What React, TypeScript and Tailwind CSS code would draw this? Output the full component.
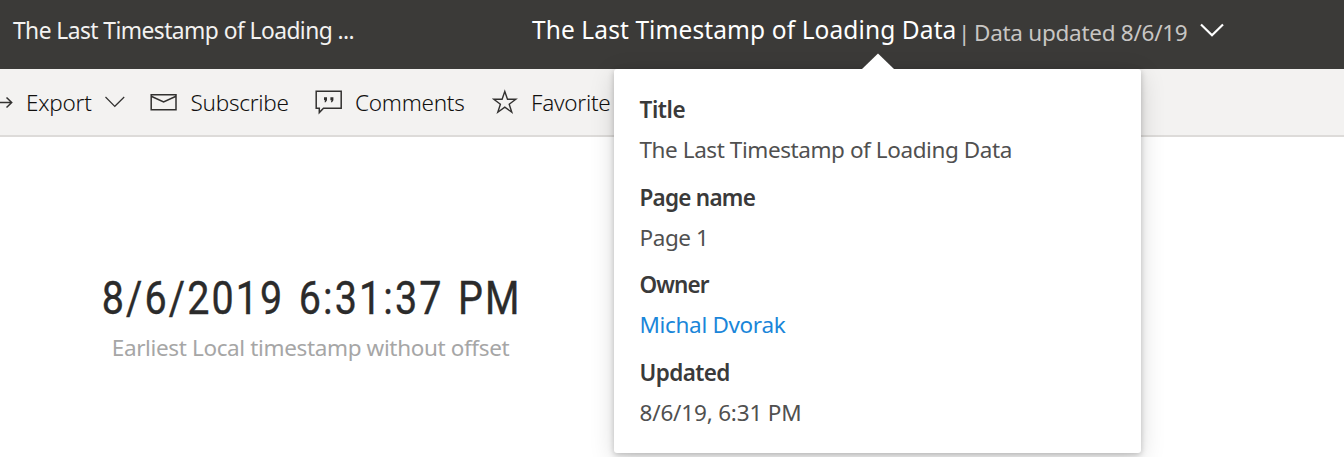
import React from 'react';

const details = [
  { label: 'Title', value: 'The Last Timestamp of Loading Data', labelClass: 'tracking-[-0.4px]', valueClass: 'text-[#505050] tracking-[-0.42px]' },
  { label: 'Page name', value: 'Page 1', labelClass: 'tracking-[-0.75px]', valueClass: 'text-[#505050] tracking-[-0.4px]' },
  { label: 'Owner', value: 'Michal Dvorak', labelClass: 'tracking-[-0.9px]', valueClass: 'text-[#1a86d9] tracking-[-0.33px]' },
  { label: 'Updated', value: '8/6/19, 6:31 PM', labelClass: 'tracking-[-0.6px]', valueClass: 'text-[#505050] tracking-[-0.18px]' },
];

function DetailsCard() {
  return (
    <div className="absolute left-[613.5px] top-[69px] z-10 h-[384px] w-[527.5px] rounded-[3px] bg-white pl-[26px] pt-[20px] shadow-[0_2px_6px_rgba(0,0,0,0.22),0_6px_26px_rgba(0,0,0,0.14)]">
      <svg className="absolute left-[247.5px] top-[-16px]" width="34" height="17" viewBox="0 0 34 17" fill="#fff">
        <path d="M0.5 16.5 17 0.5 33.5 16.5Z" />
      </svg>
      <dl className="text-[22.5px]">
        {details.map((d) => (
          <div key={d.label} className="mb-[7.5px] whitespace-nowrap">
            <dt className={'font-semibold leading-[41px] text-[#3a3a3a] ' + d.labelClass}>{d.label}</dt>
            <dd className={'leading-[39px] ' + d.valueClass}>{d.value}</dd>
          </div>
        ))}
      </dl>
    </div>
  );
}

export default function App() {
  return (
    <div className="relative h-[457px] w-[1344px] overflow-hidden bg-white font-['Noto_Sans',sans-serif]">
      <header className="flex h-[69px] items-start whitespace-nowrap bg-[#3b3a38] text-white">
        <div className="w-[519px] pl-[13px] text-[22.8px] leading-[62px] tracking-[-0.56px] text-[#f3f2f1]">The Last Timestamp of Loading ...</div>
        <div className="w-[430px] pl-[13px] text-[24.5px] leading-[60px] tracking-[0.1px]">The Last Timestamp of Loading Data</div>
        <div className="flex w-[246px] pl-[9px] text-[22.5px] leading-[66px] text-[#c8c6c4]">
          <span className="w-[16px]">|</span>
          <span className="tracking-[-0.27px]">Data updated 8/6/19</span>
        </div>
        <svg className="mt-[22px] ml-[5px]" width="24" height="16" viewBox="0 0 24 16" fill="none" stroke="#fff" strokeWidth="2.2">
          <path d="M1 2.5 12 13.2 23 2.5" />
        </svg>
      </header>

      <nav className="flex h-[68px] items-start whitespace-nowrap border-b-2 border-[#dddbd9] bg-[#f3f2f1] text-[22.5px] font-light leading-[68px] tracking-[-0.25px] text-[#11100f]">
        <svg className="mt-[27px]" width="13" height="14" viewBox="0 0 13 14" fill="none" stroke="#323130" strokeWidth="1.5">
          <path d="M0 6.5H11.5M6.5 1.5 11.7 6.5 6.5 11.5" />
        </svg>
        <span className="ml-[13px] w-[79px]">Export</span>
        <svg className="mt-[27px]" width="20" height="12" viewBox="0 0 20 12" fill="none" stroke="#323130" strokeWidth="1.2">
          <path d="M.5 1 9.8 10.3 19.2 1" />
        </svg>
        <svg className="ml-[25px] mt-[25px]" width="27" height="17" viewBox="0 0 27 17" fill="none" stroke="#323130" strokeWidth="1.5">
          <path d="M1.2 .8H26V15.8H1.2ZM1.2 2.2 13.6 8 26 2.2" />
        </svg>
        <span className="ml-[13.5px] w-[124.5px]">Subscribe</span>
        <svg className="mt-[21px]" width="28" height="25" viewBox="0 0 28 25" fill="none" stroke="#323130" strokeWidth="1.5">
          <path d="M1.2 1.2H26.2V18.2H8.5L4.3 22.6V18.2H1.2Z" />
          <path d="M9 7.3h3v2.9l-1.3 2h-1.2l.6-2H9ZM15.4 7.3h3v2.9l-1.3 2h-1.2l.6-2H15.4Z" fill="#323130" stroke="none" />
        </svg>
        <span className="ml-[12px] w-[137px]">Comments</span>
        <svg className="mt-[20px]" width="26" height="26" viewBox="0 0 26 26" fill="none" stroke="#323130" strokeWidth="1.4">
          <path d="M12.8 2.5 15.5 10.3H23.8L17.2 15.2 19.8 23.2 12.8 18.2 5.8 23.2 8.4 15.2 1.8 10.3H10.1Z" />
        </svg>
        <span className="ml-[13px]">Favorite</span>
      </nav>

      <main className="flex w-[621px] flex-col items-center whitespace-nowrap pt-[130px]">
        <div className="scale-x-[0.84] pl-[2px] font-['Roboto',sans-serif] text-[47px] font-normal leading-[62px] tracking-[2.5px] [word-spacing:3px] text-[#2b2b2b] [-webkit-text-stroke:0.4px_#2b2b2b]">8/6/2019 6:31:37 PM</div>
        <div className="text-[22.5px] leading-[38px] tracking-[-0.36px] text-[#a6a6a6]">Earliest Local timestamp without offset</div>
      </main>

      <DetailsCard />
    </div>
  );
}
